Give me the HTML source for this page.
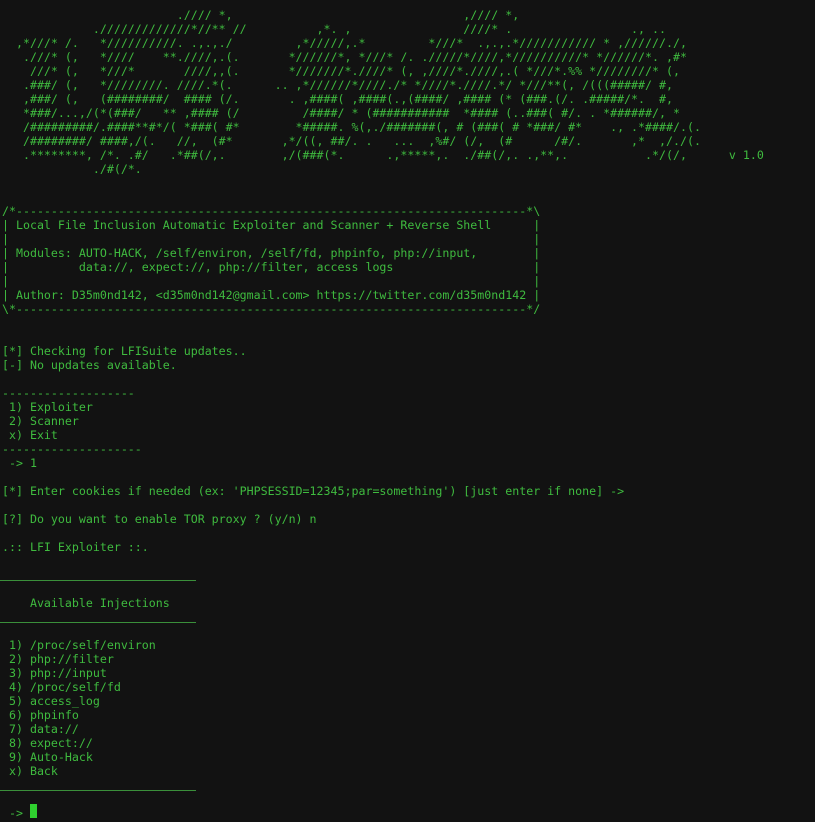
<!DOCTYPE html>
<html><head><meta charset="utf-8"><style>
html,body{margin:0;padding:0;background:#121212;width:815px;height:822px;overflow:hidden}
pre{margin:0;padding:8px 0 0 2px;font-family:"DejaVu Sans Mono","Liberation Mono",monospace;font-size:11.62px;line-height:14px;color:#3fbb3f;white-space:pre}
.r{position:absolute;left:0;width:196px;height:1px;background:#3a8f3a}
.cur{position:absolute;left:30px;top:804px;width:7px;height:14px;background:#2fd02f}
</style></head><body>
<pre>                         .//// *,                                 ,//// *,
             ./////////////*//** //          ,*. ,                ////* .                 ., ..
  ,*///* /.   *//////////. .,.,./         ,*/////,.*         *///*  .,.,.*/////////// * ,//////./,
   .///* (,   *////    **.////,.(.       *//////*, *///* /. ./////*////,*//////////* *//////*. ,#*
    ///* (,   *///*       ////,,(.       *///////*.////* (, ,////*.////,.( *///*.%% *////////* (,
   .###/ (,   *////////. ////.*(.      .. ,*//////*////./* *////*.////.*/ *///**(, /(((#####/ #,
   ,###/ (,   (########/  #### (/.       . ,####( ,####(.,(####/ ,#### (* (###.(/. .#####/*.  #,
   *###/...,/(*(###/   ** ,#### (/         /####/ * (###########  *#### (..###( #/. . *######/, *
   /#########/.####**#*/( *###( #*        *#####. %(,./#######(, # (###( # *###/ #*    ., .*####/.(.
   /########/ ####,/(.   //,  (#*       ,*/((, ##/. .   ...  ,%#/ (/,  (#      /#/.       ,*  ,/./(.
   .********, /*. .#/   .*##(/,.        ,/(###(*.      .,*****,.  ./##(/,. .,**,.           .*/(/,      v 1.0
             ./#(/*.


/*-------------------------------------------------------------------------*\
| Local File Inclusion Automatic Exploiter and Scanner + Reverse Shell      |
|                                                                           |
| Modules: AUTO-HACK, /self/environ, /self/fd, phpinfo, php://input,        |
|          data://, expect://, php://filter, access logs                    |
|                                                                           |
| Author: D35m0nd142, &lt;d35m0nd142@gmail.com&gt; https://twitter.com/d35m0nd142 |
\*-------------------------------------------------------------------------*/


[*] Checking for LFISuite updates..
[-] No updates available.

-------------------
 1) Exploiter
 2) Scanner
 x) Exit
--------------------
 -&gt; 1

[*] Enter cookies if needed (ex: 'PHPSESSID=12345;par=something') [just enter if none] -&gt;

[?] Do you want to enable TOR proxy ? (y/n) n

.:: LFI Exploiter ::.



    Available Injections


 1) /proc/self/environ
 2) php://filter
 3) php://input
 4) /proc/self/fd
 5) access_log
 6) phpinfo
 7) data://
 8) expect://
 9) Auto-Hack
 x) Back


 -&gt; </pre>
<div class="r" style="top:580px"></div>
<div class="r" style="top:622px"></div>
<div class="r" style="top:790px"></div>
<div class="cur"></div>
</body></html>
